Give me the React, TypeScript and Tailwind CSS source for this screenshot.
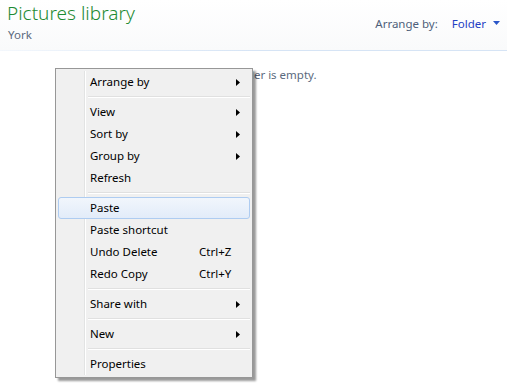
import React from 'react'

type Item =
  | { kind: 'sep' }
  | { kind: 'item'; label: string; sub?: boolean; shortcut?: string; hot?: boolean }

const items: Item[] = [
  { kind: 'item', label: 'Arrange by', sub: true },
  { kind: 'sep' },
  { kind: 'item', label: 'View', sub: true },
  { kind: 'item', label: 'Sort by', sub: true },
  { kind: 'item', label: 'Group by', sub: true },
  { kind: 'item', label: 'Refresh' },
  { kind: 'sep' },
  { kind: 'item', label: 'Paste', hot: true },
  { kind: 'item', label: 'Paste shortcut' },
  { kind: 'item', label: 'Undo Delete', shortcut: 'Ctrl+Z' },
  { kind: 'item', label: 'Redo Copy', shortcut: 'Ctrl+Y' },
  { kind: 'sep' },
  { kind: 'item', label: 'Share with', sub: true },
  { kind: 'sep' },
  { kind: 'item', label: 'New', sub: true },
  { kind: 'sep' },
  { kind: 'item', label: 'Properties' },
]

function Arrow() {
  return (
    <svg width="4" height="7" viewBox="0 0 4 7" className="block">
      <path d="M0 0 L4 3.5 L0 7 Z" fill="#000" />
    </svg>
  )
}

function ContextMenu() {
  return (
    <div className="absolute left-[55px] top-[68px] w-[198px] border border-[#979797] bg-[#f0f0f0] p-[2px] text-[11.5px] shadow-[3px_3px_2px_rgba(0,0,0,0.4)]">
      {/* gutter line */}
      <div className="absolute left-[28px] top-[2px] bottom-[2px] w-[2px] border-l border-[#e2e3e3] bg-white" />
      {items.map((it, i) =>
        it.kind === 'sep' ? (
          <div key={i} className="relative flex h-[8px] items-center pl-[30px]">
            <div className="h-[2px] w-full border-t border-[#e0e0e0] bg-white" />
          </div>
        ) : (
          <div
            key={i}
            className={
              'relative flex h-[22px] items-center pl-[31px] pr-[9px] ' +
              (it.hot ? 'rounded-[3px] border border-[#aeccf1] bg-gradient-to-b from-[#f1f6fc] to-[#e2ecf9]' : 'border border-transparent')
            }
          >
            <span className="flex-1">{it.label}</span>
            {it.shortcut && <span className="mr-[3px] w-[38px]">{it.shortcut}</span>}
            {it.sub && <Arrow />}
          </div>
        )
      )}
    </div>
  )
}

export default function App() {
  return (
    <div className="relative h-[390px] w-[507px] overflow-hidden bg-white text-[12px] text-black [font-family:'Noto_Sans',sans-serif]">
      <div className="flex h-[50px] justify-between bg-gradient-to-b from-white to-[#f9fafb] pl-[7px] pr-[7px]">
        <div>
          <div className="mt-[1px] text-[19px] leading-[24px] text-[#1d8a33] [font-weight:300]">Pictures library</div>
          <div className="mt-[3px] pl-px text-[11.5px] leading-[14px] text-[#5b6a7e]">York</div>
        </div>
        <div className="mt-[15px] flex items-start text-[11.5px]">
          <span className="text-[#4e5f7a]">Arrange by:</span>
          <span className="ml-[14px] text-[#2340c4]">Folder</span>
          <svg width="7" height="4" viewBox="0 0 7 4" className="ml-[7px] mt-[6px]">
            <path d="M0 0 L7 0 L3.5 4 Z" fill="#2a56c8" />
          </svg>
        </div>
      </div>
      <div className="h-px bg-gradient-to-r from-[#f3f7fc] via-[#d6e4f5] to-[#d6e4f5]" />
      <div className="pt-[15px] pl-[208px] text-[11.5px] text-[#5b6a7e]">This folder is empty.</div>
      <ContextMenu />
    </div>
  )
}
